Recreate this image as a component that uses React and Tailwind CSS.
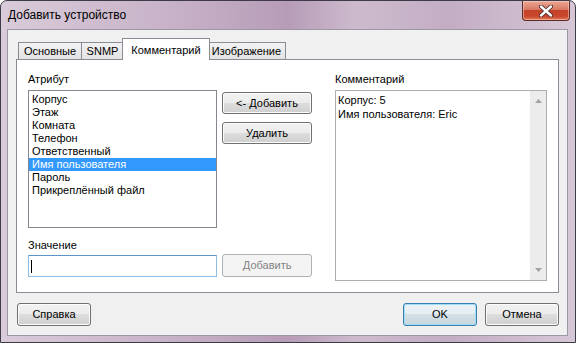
import React from 'react';

const font = { fontFamily: '"Liberation Sans", Arial, sans-serif' };

const attributes = ['Корпус', 'Этаж', 'Комната', 'Телефон', 'Ответственный', 'Имя пользователя', 'Пароль', 'Прикреплённый файл'];

function Button({ children, className = '', variant = 'normal' }) {
	const styles = {
		normal:
			'border-[#707070] bg-[linear-gradient(#f2f2f2_0%,#ebebeb_50%,#dddddd_50%,#cfcfcf_100%)] shadow-[inset_0_0_0_1px_#fcfcfc] text-black',
		default:
			'border-[#3c7fb1] bg-[linear-gradient(#eef3f7_0%,#e5edf2_50%,#d4dfe6_50%,#c9d6df_100%)] shadow-[inset_0_0_0_1px_#9fdcf6] text-black',
		disabled: 'border-[#adb2b5] bg-[#f4f4f4] text-[#838383]',
	};
	return (
		<div
			className={`flex items-center justify-center border rounded-[3px] text-[11px] leading-none ${styles[variant]} ${className}`}
		>
			{children}
		</div>
	);
}

function Tab({ label, selected, className = '' }) {
	if (selected) {
		return (
			<div
				className={`relative z-10 -mb-px -mx-[2px] flex h-[22px] items-start justify-center border border-b-0 border-[#898c95] bg-white pt-[3px] text-[11px] ${className}`}
			>
				{label}
			</div>
		);
	}
	return (
		<div
			className={`flex h-[17px] items-center justify-center border border-b-0 border-[#898c95] bg-[linear-gradient(#f2f2f2,#e3e3e3)] text-[11px] -ml-px first:ml-0 ${className}`}
		>
			{label}
		</div>
	);
}

function CloseButton() {
	return (
		<div className="mr-[5px] flex h-[20px] w-[48px] items-center justify-center rounded-b-[4px] border border-t-0 border-[#5d2b24] bg-[linear-gradient(#e9a795_0%,#d97a62_45%,#c4432a_50%,#c9462c_80%,#e07a55_100%)] shadow-[inset_0_0_0_1px_rgba(255,220,210,0.5)]">
			<svg width="14" height="12" viewBox="0 0 14 12">
				<path d="M2 1.5 L12 10.5 M12 1.5 L2 10.5" stroke="#4a2a2a" strokeWidth="4.2" strokeLinecap="round" />
				<path d="M2 1.5 L12 10.5 M12 1.5 L2 10.5" stroke="#ffffff" strokeWidth="2.4" strokeLinecap="round" />
			</svg>
		</div>
	);
}

export default function App() {
	return (
		<div
			style={font}
			className="flex h-[343px] w-[576px] flex-col overflow-hidden rounded-t-[7px] border border-[#3e3b48] bg-[linear-gradient(90deg,#d9cbd9_0%,#cdbacd_20%,#c4adc4_35%,#b79cb7_50%,#cdbbcd_62%,#c3adc3_78%,#d6c7d6_100%)] text-black"
		>
			<div className="flex h-[28px] shrink-0 items-start justify-between">
				<div className="pl-[7px] pt-[7px] text-[12px] leading-[14px] text-black">Добавить устройство</div>
				<CloseButton />
			</div>

			<div className="ml-[6px] mr-[7px] flex h-[307px] flex-col border border-[#9b97a3] bg-[#f0f0f0]">
				<div className="mt-[8px] flex h-[21px] items-end pl-[10px]">
					<Tab label="Основные" className="w-[64px]" />
					<Tab label="SNMP" className="w-[43px]" />
					<Tab label="Комментарий" selected className="w-[88px]" />
					<Tab label="Изображение" className="w-[79px]" />
				</div>

				<div className="ml-[8px] flex h-[234px] w-[543px] border border-[#898c95] bg-white pl-[11px] pt-[13px]">
					<div className="flex w-[284px] flex-col">
						<div className="h-[13px] text-[11px] leading-[13px]">Атрибут</div>
						<div className="mt-[4px] flex gap-[5px]">
							<div className="h-[138px] w-[190px] border border-[#828790] bg-white pt-[2px]">
								{attributes.map((a, i) => (
									<div
										key={a}
										className={`h-[13px] pl-[3px] text-[11px] leading-[13px] ${i === 5 ? 'bg-[#3399ff] text-white' : ''}`}
									>
										{a}
									</div>
								))}
							</div>
							<div className="mt-[2px] flex flex-col gap-[8px]">
								<Button className="h-[22px] w-[90px]">&lt;- Добавить</Button>
								<Button className="h-[22px] w-[90px]">Удалить</Button>
							</div>
						</div>
						<div className="mt-[11px] h-[13px] text-[11px] leading-[13px]">Значение</div>
						<div className="mt-[2px] flex items-end gap-[5px]">
							<div className="flex h-[22px] w-[190px] items-center border border-[#8fbde3] border-t-[#5d95c9] bg-white pl-[2px]">
								<div className="h-[13px] w-px bg-black" />
							</div>
							<Button variant="disabled" className="h-[23px] w-[90px]">
								Добавить
							</Button>
						</div>
					</div>

					<div className="ml-[23px] flex flex-col">
						<div className="h-[13px] text-[11px] leading-[13px]">Комментарий</div>
						<div className="mt-[4px] flex h-[191px] w-[212px] border border-[#abadb3] bg-white">
							<div className="flex-1 pl-[2px] pt-[2px] text-[11px] leading-[14px]">
								<div>Корпус: 5</div>
								<div>Имя пользователя: Eric</div>
							</div>
							<div className="flex w-[16px] flex-col items-center justify-between bg-[#ececec] py-[8px]">
								<svg width="7" height="4" viewBox="0 0 7 4">
									<path d="M0 4 L3.5 0 L7 4 Z" fill="#a3a3a3" />
								</svg>
								<svg width="7" height="4" viewBox="0 0 7 4">
									<path d="M0 0 L3.5 4 L7 0 Z" fill="#a3a3a3" />
								</svg>
							</div>
						</div>
					</div>
				</div>

				<div className="mt-[10px] flex items-center justify-between pl-[9px] pr-[8px]">
					<Button className="h-[23px] w-[74px]">Справка</Button>
					<div className="flex gap-[8px]">
						<Button variant="default" className="h-[23px] w-[74px]">
							OK
						</Button>
						<Button className="h-[23px] w-[74px]">Отмена</Button>
					</div>
				</div>
			</div>
		</div>
	);
}
